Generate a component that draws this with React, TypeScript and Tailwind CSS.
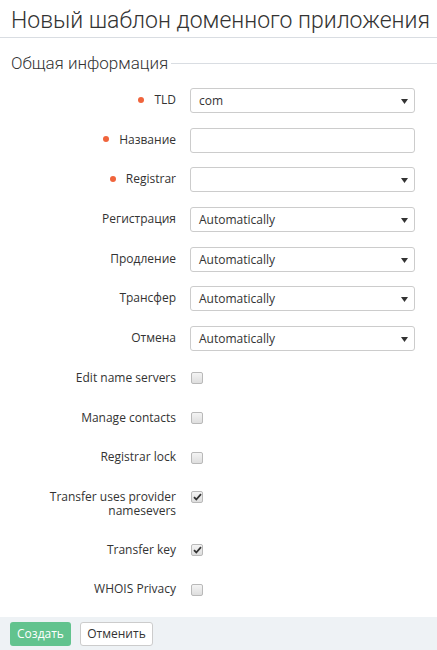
import React from "react";

const Dot = () => (
  <span className="inline-block w-[6px] h-[6px] rounded-full bg-[#f0643c] mr-[10px] align-middle relative top-[-1px]" />
);

const Caret = () => (
  <svg className="absolute right-[6px] top-[10px]" width="7" height="5" viewBox="0 0 7 5">
    <path d="M0 0 H7 L3.5 5 Z" fill="#333" />
  </svg>
);

const Row = ({ label, required, children }: { label: string; required?: boolean; children: React.ReactNode }) => (
  <div className="flex items-start mb-[14.7px] min-h-[25px]">
    <div className="w-[176px] pl-[46px] pr-0 text-right py-[5px] leading-[14px] text-[12px] text-[#333]">
      {required && <Dot />}
      {label}
    </div>
    <div className="ml-[14px] w-[225px]">{children}</div>
  </div>
);

const Select = ({ value }: { value?: string }) => (
  <div className="relative h-[25px] border border-[#ccc] rounded-[3px] bg-white px-[8px] text-[12px] leading-[23px] text-[#333]">
    {value}
    <Caret />
  </div>
);

const Check = ({ checked }: { checked?: boolean }) => (
  <div className="mt-[6.5px] ml-[1px] w-[12px] h-[12px] rounded-[2px] border border-[#b9b9b9] bg-gradient-to-b from-[#f4f4f4] to-[#dedede] flex items-center justify-center">
    {checked && (
      <svg width="9" height="8" viewBox="0 0 9 8">
        <path d="M1 4.2 L3.3 6.5 L8 1.2" fill="none" stroke="#333" strokeWidth="1.8" />
      </svg>
    )}
  </div>
);

export default function App() {
  return (
    <div className="w-[437px] h-[650px] bg-white flex flex-col font-['Open_Sans',sans-serif] text-[#333]">
      <h1 className="px-[11px] pt-[5px] h-[41px] text-[23px] leading-[32px] font-light font-['Roboto',sans-serif] border-b border-[#d9dde2] whitespace-nowrap">
        Новый шаблон доменного приложения
      </h1>
      <div className="flex items-center mt-[13px] pl-[11px]">
        <span className="text-[17px] font-light leading-[24px] font-['Roboto',sans-serif]">Общая информация</span>
        <div className="flex-1 h-px bg-[#d9dde2] ml-[3px]" />
      </div>
      <div className="mt-[13px] pl-0">
        <Row label="TLD" required>
          <Select value="com" />
        </Row>
        <Row label="Название" required>
          <div className="h-[25px] border border-[#ccc] rounded-[3px] bg-white" />
        </Row>
        <Row label="Registrar" required>
          <Select />
        </Row>
        <Row label="Регистрация">
          <Select value="Automatically" />
        </Row>
        <Row label="Продление">
          <Select value="Automatically" />
        </Row>
        <Row label="Трансфер">
          <Select value="Automatically" />
        </Row>
        <Row label="Отмена">
          <Select value="Automatically" />
        </Row>
        <Row label="Edit name servers">
          <Check />
        </Row>
        <Row label="Manage contacts">
          <Check />
        </Row>
        <Row label="Registrar lock">
          <Check />
        </Row>
        <Row label="Transfer uses provider namesevers">
          <Check checked />
        </Row>
        <Row label="Transfer key">
          <Check checked />
        </Row>
        <Row label="WHOIS Privacy">
          <Check />
        </Row>
      </div>
      <div className="mt-auto h-[36px] bg-[#eef2f5] flex items-start pt-[5px] pl-[10px] gap-[9px]">
        <button className="h-[24px] w-[61px] rounded-[3px] bg-[#62c38e] text-white text-[12px] leading-[24px]">
          Создать
        </button>
        <button className="h-[24px] w-[73px] rounded-[3px] bg-white border border-[#ccc] text-[#333] text-[12px] leading-[22px]">
          Отменить
        </button>
      </div>
    </div>
  );
}
